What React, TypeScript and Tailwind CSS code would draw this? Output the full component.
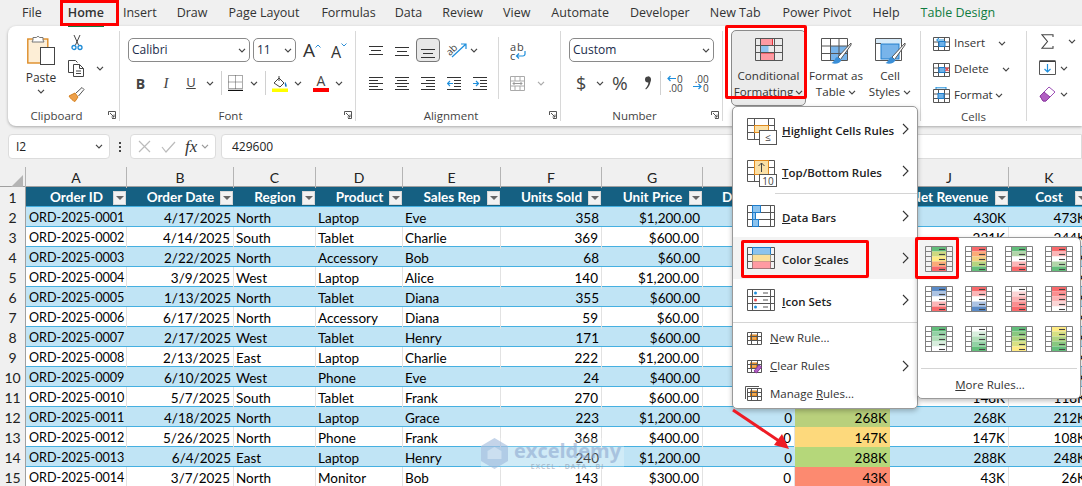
import type { ReactNode } from "react";

const sans = "font-['Open_Sans','Noto_Sans',sans-serif]";

type Row = {
  id: string;
  date: string;
  region: string;
  product: string;
  rep: string;
  units: string;
  price: string;
  gross: string;
  net: string;
  cost: string;
  fill: string;
};

const rows: Row[] = [
  { id: "0001", date: "4/17/2025", region: "North", product: "Laptop", rep: "Eve", units: "358", price: "$1,200.00", gross: "430K", net: "430K", cost: "473K", fill: "bg-[#63be7b]" },
  { id: "0002", date: "4/14/2025", region: "South", product: "Tablet", rep: "Charlie", units: "369", price: "$600.00", gross: "221K", net: "221K", cost: "244K", fill: "bg-[#c4d67c]" },
  { id: "0003", date: "2/22/2025", region: "North", product: "Accessory", rep: "Bob", units: "68", price: "$60.00", gross: "4K", net: "4K", cost: "3K", fill: "bg-[#f8696b]" },
  { id: "0004", date: "3/9/2025", region: "West", product: "Laptop", rep: "Alice", units: "140", price: "$1,200.00", gross: "168K", net: "168K", cost: "130K", fill: "bg-[#fedd80]" },
  { id: "0005", date: "1/13/2025", region: "North", product: "Tablet", rep: "Diana", units: "355", price: "$600.00", gross: "213K", net: "213K", cost: "170K", fill: "bg-[#c8d67e]" },
  { id: "0006", date: "6/17/2025", region: "North", product: "Accessory", rep: "Diana", units: "59", price: "$60.00", gross: "4K", net: "4K", cost: "3K", fill: "bg-[#f8696b]" },
  { id: "0007", date: "2/17/2025", region: "West", product: "Tablet", rep: "Henry", units: "171", price: "$600.00", gross: "103K", net: "103K", cost: "82K", fill: "bg-[#fdb47a]" },
  { id: "0008", date: "2/13/2025", region: "East", product: "Laptop", rep: "Charlie", units: "222", price: "$1,200.00", gross: "266K", net: "266K", cost: "210K", fill: "bg-[#b9d07c]" },
  { id: "0009", date: "6/10/2025", region: "West", product: "Phone", rep: "Eve", units: "24", price: "$400.00", gross: "10K", net: "10K", cost: "8K", fill: "bg-[#f8696b]" },
  { id: "0010", date: "5/7/2025", region: "South", product: "Tablet", rep: "Frank", units: "270", price: "$600.00", gross: "148K", net: "148K", cost: "118K", fill: "bg-[#fed67c]" },
  { id: "0011", date: "4/18/2025", region: "North", product: "Laptop", rep: "Grace", units: "223", price: "$1,200.00", gross: "268K", net: "268K", cost: "212K", fill: "bg-[#b9d07c]" },
  { id: "0012", date: "5/26/2025", region: "North", product: "Phone", rep: "Frank", units: "368", price: "$400.00", gross: "147K", net: "147K", cost: "108K", fill: "bg-[#fdd97c]" },
  { id: "0013", date: "6/4/2025", region: "East", product: "Laptop", rep: "Henry", units: "240", price: "$1,200.00", gross: "288K", net: "288K", cost: "248K", fill: "bg-[#b5d77a]" },
  { id: "0014", date: "3/7/2025", region: "North", product: "Monitor", rep: "Bob", units: "143", price: "$300.00", gross: "43K", net: "43K", cost: "26K", fill: "bg-[#fc8a70]" },
];

const gridCols =
  "grid grid-cols-[26px_101px_107px_82px_87px_98px_101px_101px_92px_95px_119px_80px]";

const swatches = [
  ["#63be7b", "#cdd97f", "#ffeb84", "#fbaa77", "#f8696b"],
  ["#f8696b", "#fbaa77", "#f3cf7f", "#b5d47f", "#63be7b"],
  ["#63be7b", "#b1d5a8", "#ffffff", "#fcb6b7", "#f8696b"],
  ["#f8696b", "#fcb6b7", "#ffffff", "#b1d5a8", "#63be7b"],
  ["#5a8ac6", "#acc3e3", "#ffffff", "#fcb6b7", "#f8696b"],
  ["#f8696b", "#fcb6b7", "#ffffff", "#acc3e3", "#5a8ac6"],
  ["#ffffff", "#fcd5d5", "#fcb3b4", "#fa8e8f", "#f8696b"],
  ["#f8696b", "#fa8e8f", "#fcb3b4", "#fcd5d5", "#ffffff"],
  ["#63be7b", "#92d1a4", "#b1deb9", "#d8eedd", "#ffffff"],
  ["#ffffff", "#d8eedd", "#b1deb9", "#92d1a4", "#63be7b"],
  ["#63be7b", "#88c77f", "#afd480", "#d7e082", "#ffeb84"],
  ["#ffeb84", "#d7e082", "#afd480", "#88c77f", "#63be7b"],
];

function Chev({ color = "#444" }: { color?: string }) {
  return (
    <svg width="8" height="5" viewBox="0 0 8 5" fill="none" stroke={color} strokeWidth="1.2">
      <path d="M1 .8l3 3 3-3" />
    </svg>
  );
}

function ChevSlot({ className }: { className: string }) {
  return (
    <div className={`flex justify-center ${className}`}>
      <Chev />
    </div>
  );
}

function Arrow() {
  return (
    <svg width="7" height="12" viewBox="0 0 7 12" fill="none" stroke="#333" strokeWidth="1.1">
      <path d="M1 1l5 5-5 5" />
    </svg>
  );
}

function Launcher() {
  return (
    <svg className="absolute right-[3px] bottom-[7px]" width="8" height="8" viewBox="0 0 8 8" fill="none" stroke="#555">
      <path d="M.5 4V.5H7.5V7.5H4M2 2l4 4M6 3.500V6H3.500" />
    </svg>
  );
}

function Lines({ lines, blue }: { lines: number[][]; blue?: ReactNode }) {
  return (
    <svg width="15" height="15" viewBox="0 0 15 15" stroke="#333" strokeWidth="1" fill="none">
      {lines.map(([a, b, y]) => (
        <path key={`${a}${y}`} d={`M${a} ${y + 0.5}H${b}`} />
      ))}
      {blue}
    </svg>
  );
}

function Group({ width, label, launcher, children }: { width: string; label: string; launcher?: boolean; children: ReactNode }) {
  return (
    <div className={`relative flex h-full shrink-0 flex-col ${width}`}>
      <div className="flex-1">{children}</div>
      <div className={`flex h-[20px] items-center justify-center text-[11.5px] text-[#444] ${launcher ? "pr-[14px]" : ""}`}>{label}</div>
      {launcher && <Launcher />}
    </div>
  );
}

function Divider() {
  return <div className="my-[5px] w-px shrink-0 bg-[#d8d8d8]" />;
}

function PasteIcon() {
  return (
    <svg width="28" height="33" viewBox="0 0 28 33" fill="none">
      <rect x=".8" y="5" width="20" height="24" fill="#fdeed6" stroke="#dd8c26" strokeWidth="1.4" />
      <path d="M6 6V3.500h3.500a1.600 1.600 0 013 0H16V6l1 2H5z" fill="#fff" stroke="#777" />
      <rect x="13.500" y="13.500" width="14" height="17" fill="#fff" stroke="#444" />
    </svg>
  );
}

function CutIcon() {
  return (
    <svg width="12" height="17" viewBox="0 0 12 17" fill="none">
      <path d="M3 1l4.500 10M9 1L4.500 11" stroke="#444" />
      <circle cx="3" cy="13.500" r="2" stroke="#1c8ad6" strokeWidth="1.3" />
      <circle cx="9" cy="13.500" r="2" stroke="#1c8ad6" strokeWidth="1.3" />
    </svg>
  );
}

function CopyIcon() {
  return (
    <svg width="17" height="17" viewBox="0 0 17 17" fill="none" stroke="#444">
      <path d="M5.500 12.500H.5V.5h7l2 2" />
      <path d="M5.500 4.500h6l4 4v8h-10zM11.500 4.500v4h4M8 11h5M8 13.500h5" fill="#fff" />
    </svg>
  );
}

function BrushIcon() {
  return (
    <svg width="17" height="16" viewBox="0 0 17 16" fill="none">
      <path d="M1 10l6-3 3 4-3 4.500C5 15 2.500 12.500 1 10z" fill="#eda04a" stroke="#d5801f" />
      <path d="M8 7l6-5.500 2 2-5.500 6.500" fill="#fff" stroke="#555" />
    </svg>
  );
}

function GrowFont({ up }: { up?: boolean }) {
  return (
    <div className="flex items-start">
      <span className={`${up ? "text-[19px]" : "text-[16px] mt-[3px]"} leading-[24px] text-[#333]`}>A</span>
      <svg className="mt-[6px]" width="6" height="4" viewBox="0 0 6 4" fill="none" stroke="#2f8fd6">
        <path d={up ? "M.5 3.500L3 1l2.500 2.500" : "M.5.5L3 3 5.500.5"} />
      </svg>
    </div>
  );
}

function BordersIcon() {
  return (
    <svg width="15" height="16" viewBox="0 0 15 16" fill="none" stroke="#555" strokeDasharray="1 1">
      <path d="M.5.500h14v13H.5zM7.500.5v13M.5 7h14" />
      <path d="M0 15.500h15" stroke="#111" strokeWidth="1.4" strokeDasharray="none" />
    </svg>
  );
}

function FillIcon() {
  return (
    <svg width="16" height="17" viewBox="0 0 16 17" fill="none">
      <path d="M2 8l5-5 5 5-4 4z" stroke="#444" fill="#fff" />
      <path d="M7 1v5" stroke="#444" />
      <path d="M13 7c2 2 2 5 1 5s-1.500-3-1-5z" fill="#1573c0" />
      <rect y="13.500" width="16" height="3.500" fill="#ffff00" />
    </svg>
  );
}

function WrapIcon() {
  return (
    <div className="relative h-[17px] w-[16px] font-['Open_Sans',sans-serif] text-[11px] leading-[9px] text-[#444]">
      <div className="tracking-[1px]">ab</div>
      <div>c</div>
      <svg className="absolute right-0 bottom-0" width="11" height="9" viewBox="0 0 11 9" fill="none" stroke="#1f8fdc" strokeWidth="1.2">
        <path d="M10 1v3a2 2 0 01-2 2H2M4 3.500L1.500 6 4 8.500" />
      </svg>
    </div>
  );
}

function MergeIcon() {
  return (
    <svg width="15" height="15" viewBox="0 0 15 15" fill="none" stroke="#aaa">
      <path d="M.5.500h14v14H.5zM.5 5h14M.5 10h14M5 .5V5M10 .5V5M5 10v4.500M10 10v4.500" />
      <path d="M3 7.500h9M4.500 6L3 7.500 4.500 9M10.500 6L12 7.500 10.500 9" stroke="#999" />
    </svg>
  );
}

function DecimalIcon({ more }: { more?: boolean }) {
  return (
    <div className="relative h-[16px] w-[16px] text-[10px] leading-[8px] text-[#444]">
      <div className="text-right">{more ? ".00" : "0"}</div>
      <div className="mt-[1px] text-right">{more ? "0" : ".00"}</div>
      <svg className={`absolute left-0 ${more ? "bottom-[1px]" : "top-[0px]"}`} width="9" height="7" viewBox="0 0 9 7" fill="none" stroke="#1f8fdc" strokeWidth="1.2">
        <path d={more ? "M0 3.500h8M5.500 1L8 3.500 5.500 6" : "M9 3.500H1M3.500 1L1 3.500 3.500 6"} />
      </svg>
    </div>
  );
}

function CondIcon() {
  return (
    <svg width="28" height="23" viewBox="0 0 28 23" fill="none">
      <rect x="5.500" y="7.500" width="8" height="7" fill="#8fc3ef" />
      <rect x="5.500" y=".5" width="12" height="7" fill="#ff9aa2" stroke="#e0343a" />
      <rect x="5.500" y="15" width="14" height="7.500" fill="#ff9aa2" stroke="#e0343a" />
      <path d="M.5.500h27v22H.5zM.5 7.500h27M.5 14.500h27M5.500.5v22M19.500.5v22" stroke="#555" />
    </svg>
  );
}

function StyleIcon({ wide }: { wide?: boolean }) {
  return (
    <svg width="31" height="30" viewBox="0 0 31 30" fill="none">
      {wide ? (
        <>
          <rect x=".5" y=".5" width="26" height="5" fill="#d6eaf9" />
          <rect x="6" y="6" width="18" height="15" fill="#78b4ea" stroke="#1f7dcb" />
        </>
      ) : (
        <rect x="10" y="8" width="16" height="15" fill="#78b4ea" />
      )}
      <path d={wide ? "M.5.500h26v22H.5zM.5 5.500h5.500" : "M.5.500h26v22H.5zM.5 8h26M.5 15.500h26M9.500.5v22M18 .5v22"} stroke="#555" />
      <path d="M30 5L17 19l2.500 2.500L30 7z" fill="#fff" stroke="#555" />
      <path d="M16.500 19c-3 .5-2 4-6 6 4 2 9 0 10-3z" fill="#3a8fd8" />
    </svg>
  );
}

function CellOpIcon({ kind }: { kind: "insert" | "delete" | "format" }) {
  return (
    <svg width="17" height="16" viewBox="0 0 17 16" fill="none">
      <path d="M.5 2.500h16v13H.5zM.5 7h16M.5 11.500h16M5.500 2.500v13M11.500 2.500v13" stroke="#555" />
      <rect x={kind === "format" ? 5 : 6} y="6.500" width="6" height="5" fill="#6fb2e8" stroke="#1f7dcb" />
      {kind === "insert" && <path d="M11 5H4M6 3L3.500 5 6 7" stroke="#1f8fdc" fill="#fff" />}
      {kind === "delete" && <path d="M12.500 6.500l3 3.500M15.500 6.500l-3 3.500" stroke="#e5484d" strokeWidth="1.2" />}
      {kind === "format" && <path d="M3 .8h10M3 0v2M13 0v2" stroke="#1f8fdc" />}
    </svg>
  );
}

function CellOp({ kind, label, chev }: { kind: "insert" | "delete" | "format"; label: string; chev: string }) {
  return (
    <div className="flex h-[26px] items-center text-[11.5px] text-[#333]">
      <CellOpIcon kind={kind} />
      <span className="ml-[4px]">{label}</span>
      <div className={chev}>
        <Chev />
      </div>
    </div>
  );
}

// narrow = outer columns are 5px wide (data bars, color scales, icon sets)
function MenuGridIcon({ children, narrow }: { children?: ReactNode; narrow?: boolean }) {
  const grid = narrow
    ? "M.5.500h27v21H.5zM.5 7.500h27M.5 14.500h27M5.500.5v21M23.500.5v21"
    : "M.5.500h27v21H.5zM.5 7.500h27M.5 14.500h27M7.500.5v21M21.500.5v21";
  return (
    <svg width="30" height="28" viewBox="0 0 30 28" fill="none" className="mt-[6px] shrink-0">
      <path d={grid} stroke="#555" />
      {children}
    </svg>
  );
}

function BigItem({ icon, label, active }: { icon: ReactNode; label: ReactNode; active?: boolean }) {
  return (
    <div className={`flex h-[42px] shrink-0 items-center pl-[14px] pr-[8px] ${active ? "bg-[#f3f3f3]" : ""}`}>
      <div className="w-[35px] shrink-0">{icon}</div>
      <div className="flex-1 pt-[4px] text-[11.5px] font-semibold text-[#222]">{label}</div>
      <Arrow />
    </div>
  );
}

function SmallIcon({ variant }: { variant: "new" | "clear" | "manage" }) {
  return (
    <svg width="17" height="16" viewBox="0 0 17 16" fill="none">
      {variant === "manage" && <path d="M.5 13V.5H14" stroke="#555" />}
      <rect x="5.500" y="5" width="6" height="5" fill="#f3a94f" stroke="#d47d17" />
      <path d="M2.500 2.500h14v12h-14zM2.500 6.500h14M2.500 10.500h14M6.500 2.500v12M12.500 2.500v12" stroke="#555" />
      {variant === "clear" && <path d="M9 13l5-6 2.500 2-5 6z" fill="#b15fc2" stroke="#8c3aa0" />}
    </svg>
  );
}

function SmallItem({ variant, label, more }: { variant: "new" | "clear" | "manage"; label: ReactNode; more?: boolean }) {
  return (
    <div className="flex h-[28px] shrink-0 items-center pl-[12px] pr-[8px] text-[11.5px] text-[#333]">
      <div className="w-[25px] shrink-0">
        <SmallIcon variant={variant} />
      </div>
      <div className="flex-1">{label}</div>
      {more && <Arrow />}
    </div>
  );
}

function Swatch({ colors }: { colors: string[] }) {
  return (
    <svg width="28" height="26" viewBox="0 0 28 26" fill="none">
      {colors.map((c, i) => (
        <g key={i}>
          <rect x="6.500" y={0.5 + i * 5} width="15" height="5" fill={c} />
          <path d={`M14 ${3.5 + i * 5}h6`} stroke="#444" strokeWidth="1.1" />
        </g>
      ))}
      <path d="M.5.500h27v25H.5zM.5 5.500h6M.5 10.500h6M.5 15.500h6M.5 20.500h6M21.500 5.500h6M21.500 10.500h6M21.500 15.500h6M21.500 20.500h6M6.500.5v25M21.500.5v25" stroke="#808080" />
    </svg>
  );
}

function ColHead({ label, right }: { label: string; right?: boolean }) {
  return (
    <div className={`flex items-center justify-center border-[#b4b4b4] text-[#222] ${right ? "" : "border-r"}`}>{label}</div>
  );
}

function HeadCell({ label }: { label: string }) {
  return (
    <div className="relative flex items-center justify-center overflow-hidden whitespace-nowrap font-bold text-white">
      {label}
      <div className="absolute top-[4px] right-[1px] flex h-[14px] w-[13px] items-center justify-center border border-[#d8d8d8] bg-[#f2f2f2]">
        <div className="h-0 w-0 border-x-[4px] border-t-[4px] border-x-transparent border-t-[#666]" />
      </div>
    </div>
  );
}

function Cell({ children, right, grid }: { children?: ReactNode; right?: boolean; grid?: boolean }) {
  return (
    <div className={`flex items-center overflow-hidden whitespace-nowrap text-black ${right ? "justify-end pr-[3px]" : "pl-[2px]"} ${grid ? "border-r border-[#e2e2e2]" : ""}`}>
      {children}
    </div>
  );
}

export default function App() {
  return (
    <div className={`relative h-[486px] w-[1082px] overflow-hidden bg-[#f0f0f0] ${sans}`}>
      {/* tabs */}
      <div className="flex h-[26px] items-center pl-[22px] text-[12.5px] text-[#333]">
        <span>File</span>
        <span className="relative ml-[26px] font-semibold">
          Home
          <span className="absolute right-0 bottom-[-5px] left-0 h-[2px] bg-[#107c41]" />
        </span>
        <span className="ml-[19px]">Insert</span>
        <span className="ml-[20px]">Draw</span>
        <span className="ml-[21px]">Page Layout</span>
        <span className="ml-[22px]">Formulas</span>
        <span className="ml-[19px]">Data</span>
        <span className="ml-[20px]">Review</span>
        <span className="ml-[20px]">View</span>
        <span className="ml-[21px]">Automate</span>
        <span className="ml-[21px]">Developer</span>
        <span className="ml-[20px]">New Tab</span>
        <span className="ml-[22px]">Power Pivot</span>
        <span className="ml-[21px]">Help</span>
        <span className="ml-[21px] text-[#107c41]">Table Design</span>
      </div>

      {/* ribbon */}
      <div className="ml-[8px] flex h-[100px] rounded-l-[8px] bg-white shadow-[0_1px_3px_rgba(0,0,0,0.3)]">
        <Group width="w-[111px]" label="Clipboard" launcher>
          <div className="flex h-full">
            <div className="ml-[13px] flex w-[40px] flex-col items-center pt-[8px]">
              <PasteIcon />
              <span className="mt-[3px] text-[12px] leading-[16px] text-[#333]">Paste</span>
              <div className="mt-[3px]">
                <Chev />
              </div>
            </div>
            <div className="ml-[7px] flex flex-col pt-[8px]">
              <div className="ml-[3px]">
                <CutIcon />
              </div>
              <div className="mt-[9px] flex items-center">
                <CopyIcon />
                <div className="ml-[11px]">
                  <Chev />
                </div>
              </div>
              <div className="mt-[9px]">
                <BrushIcon />
              </div>
            </div>
          </div>
        </Group>
        <Divider />
        <Group width="w-[235px]" label="Font" launcher>
          <div className="pt-[12px] pl-[8px]">
            <div className="flex h-[24px] items-center">
              <div className="flex h-[24px] w-[122px] items-center justify-between rounded-[5px] border border-[#8a8a8a] px-[3px] text-[12px] text-[#1a2b4a]">
                Calibri
                <Chev />
              </div>
              <div className="ml-[3px] flex h-[24px] w-[43px] items-center justify-between rounded-[5px] border border-[#8a8a8a] pr-[3px] pl-[3px] text-[12px] text-[#1a2b4a]">
                11
                <Chev />
              </div>
              <div className="ml-[7px] w-[28px]">
                <GrowFont up />
              </div>
              <GrowFont />
            </div>
            <div className="mt-[9px] flex h-[24px] items-center">
              <div className="flex w-[25px] justify-center text-[14px] font-bold text-[#444]">B</div>
              <div className="flex w-[26px] justify-center font-['Liberation_Serif',serif] text-[15px] italic text-[#444]">I</div>
              <div className="flex w-[24px] justify-center text-[13px] text-[#444] underline">U</div>
              <ChevSlot className="w-[14px]" />
              <div className="ml-[4px] h-[24px] w-px bg-[#d0d0d0]" />
              <div className="ml-[6px] w-[15px]">
                <BordersIcon />
              </div>
              <ChevSlot className="w-[22px]" />
              <div className="h-[24px] w-px bg-[#d0d0d0]" />
              <div className="ml-[6px] w-[16px]">
                <FillIcon />
              </div>
              <ChevSlot className="w-[20px]" />
              <div className="ml-[5px] flex w-[16px] flex-col items-center">
                <span className="text-[14px] leading-[13px] text-[#444]">A</span>
                <div className="mt-[1px] h-[4px] w-[16px] bg-[#ff0000]" />
              </div>
              <ChevSlot className="w-[20px]" />
            </div>
          </div>
        </Group>
        <Divider />
        <Group width="w-[204px]" label="Alignment" launcher>
          <div className="flex h-full">
            <div className="ml-[13px] w-[129px] pt-[12px]">
              <div className="flex h-[24px] items-center">
                <Lines lines={[[0, 14, 3], [2, 12, 7], [0, 14, 11]]} />
                <div className="ml-[11px]">
                  <Lines lines={[[0, 14, 4], [2, 12, 8], [0, 14, 12]]} />
                </div>
                <div className="ml-[6px] flex h-[24px] w-[24px] items-center justify-center rounded-[4px] border border-[#777] bg-[#e8e8e8]">
                  <Lines lines={[[0, 14, 6], [2, 12, 10], [0, 14, 14]]} />
                </div>
                <svg className="ml-[6px]" width="22" height="18" viewBox="0 0 22 18" fill="none" stroke="#1f8fdc" strokeWidth="1.2">
                  <path d="M6 16L20 3M15 3h5v5" />
                  <text x="0" y="12" fontSize="10" fill="#444" stroke="none" transform="rotate(-45 6 9)">ab</text>
                </svg>
                <div className="ml-[2px]">
                  <Chev />
                </div>
              </div>
              <div className="mt-[9px] flex h-[24px] items-center gap-[11px]">
                <Lines lines={[[0, 14, 1], [0, 9, 4], [0, 14, 7], [0, 9, 10], [0, 14, 13]]} />
                <Lines lines={[[0, 14, 1], [2, 12, 4], [0, 14, 7], [2, 12, 10], [0, 14, 13]]} />
                <Lines lines={[[0, 14, 1], [5, 14, 4], [0, 14, 7], [5, 14, 10], [0, 14, 13]]} />
                <Lines lines={[[0, 14, 1], [7, 14, 4], [7, 14, 7], [7, 14, 10], [0, 14, 13]]} blue={<path d="M6 7.500H1M3 5L.5 7.500 3 10" stroke="#1f8fdc" strokeWidth="1.2" />} />
                <Lines lines={[[0, 14, 1], [7, 14, 4], [7, 14, 7], [7, 14, 10], [0, 14, 13]]} blue={<path d="M0 7.500h5M3 5l2.500 2.500L3 10" stroke="#1f8fdc" strokeWidth="1.2" />} />
              </div>
            </div>
            <div className="mt-[11px] h-[62px] w-px bg-[#d8d8d8]" />
            <div className="ml-[11px] flex flex-col pt-[16px]">
              <WrapIcon />
              <div className="mt-[17px] flex items-center">
                <MergeIcon />
                <div className="ml-[12px]">
                  <Chev color="#aaa" />
                </div>
              </div>
            </div>
          </div>
        </Group>
        <Divider />
        <Group width="w-[161px]" label="Number" launcher>
          <div className="pt-[12px] pl-[8px]">
            <div className="flex h-[24px] w-[145px] items-center justify-between rounded-[5px] border border-[#8a8a8a] px-[3px] text-[12px] text-[#1a2b4a]">
              Custom
              <Chev />
            </div>
            <div className="mt-[9px] flex h-[24px] items-center text-[#444]">
              <div className="ml-[7px] w-[10px] text-[18px] leading-[24px]">$</div>
              <div className="ml-[10px]">
                <Chev />
              </div>
              <div className="ml-[8px] text-[19px] leading-[24px]">%</div>
              <svg className="ml-[17px] mr-[9px]" width="6" height="14" viewBox="0 0 6 14" fill="#444">
                <circle cx="3" cy="3.500" r="3" />
                <path d="M3.500 0C6.500 2 6.500 9 1 13.500L.3 12.800C3.500 9.500 3.800 6 3 6z" />
              </svg>
              <div className="h-[24px] w-px bg-[#d0d0d0]" />
              <div className="ml-[6px]">
                <DecimalIcon />
              </div>
              <div className="ml-[10px]">
                <DecimalIcon more />
              </div>
            </div>
          </div>
        </Group>
        <Divider />
        <Group width="w-[197px]" label="">
          <div className="flex pt-[4px] text-[11.6px] leading-[16px] text-[#333]">
            <div className="ml-[8px] flex h-[76px] w-[75px] flex-col items-center rounded-[5px] border border-[#8a8a8a] bg-[#ebebeb] pt-[7px]">
              <CondIcon />
              <span className="mt-[7px]">Conditional</span>
              <span className="flex items-center gap-[2px]">
                Formatting <Chev />
              </span>
            </div>
            <div className="flex w-[60px] flex-col items-center pt-[8px]">
              <StyleIcon />
              <span className="whitespace-nowrap">Format as</span>
              <span className="flex items-center gap-[3px]">
                Table <Chev />
              </span>
            </div>
            <div className="flex w-[48px] flex-col items-center pt-[8px]">
              <StyleIcon wide />
              <span>Cell</span>
              <span className="flex items-center gap-[3px]">
                Styles <Chev />
              </span>
            </div>
          </div>
        </Group>
        <Divider />
        <Group width="w-[105px]" label="Cells">
          <div className="pt-[4px] pl-[12px]">
            <CellOp kind="insert" label="Insert" chev="ml-[13px]" />
            <CellOp kind="delete" label="Delete" chev="ml-[13px]" />
            <CellOp kind="format" label="Format" chev="ml-[2px]" />
          </div>
        </Group>
        <Divider />
        <div className="flex flex-1 flex-col pt-[8px] pl-[12px]">
          <div className="flex h-[26px] items-start">
            <svg className="ml-[2px]" width="13" height="15" viewBox="0 0 13 15" fill="none" stroke="#444" strokeWidth="1.1">
              <path d="M12 3V.8H1l5.500 6.700L1 14.200h11V12" />
            </svg>
            <div className="ml-[14px] mt-[5px]">
              <Chev />
            </div>
          </div>
          <div className="flex h-[26px] items-start">
            <svg width="17" height="16" viewBox="0 0 17 16" fill="none">
              <path d="M.5 1.500h16v13H.5z" stroke="#555" />
              <path d="M.5 1h16" stroke="#333" strokeWidth="1.500" />
              <path d="M8.500 4v8M5.500 9l3 3 3-3" stroke="#1f8fdc" strokeWidth="1.200" />
            </svg>
            <div className="ml-[4px] mt-[6px]">
              <Chev />
            </div>
          </div>
          <div className="flex h-[26px] items-start">
            <svg width="17" height="16" viewBox="0 0 17 16" fill="none">
              <path d="M1 10l9-9 6 5-9 9H4z" fill="#fff" stroke="#9c4fb5" />
              <path d="M1 10l4-4 6 5-4 4H4z" fill="#b15fc2" stroke="#8c3aa0" />
            </svg>
            <div className="ml-[4px] mt-[6px]">
              <Chev />
            </div>
          </div>
        </div>
      </div>

      {/* formula bar */}
      <div className="mt-[8px] flex h-[25px] items-stretch text-[12px] text-[#222]">
        <div className="ml-[8px] flex w-[102px] items-center justify-between rounded-[4px] border border-[#dcdcdc] bg-white pr-[6px] pl-[7px]">
          I2
          <Chev />
        </div>
        <div className="flex w-[20px] flex-col items-center justify-center gap-[2px]">
          <div className="h-[2px] w-[2px] bg-[#444]" />
          <div className="h-[2px] w-[2px] bg-[#444]" />
          <div className="h-[2px] w-[2px] bg-[#444]" />
        </div>
        <div className="flex w-[86px] items-center rounded-[4px] border border-[#dcdcdc] bg-white pl-[7px]">
          <svg width="13" height="13" viewBox="0 0 13 13" fill="none" stroke="#bbb" strokeWidth="1.2">
            <path d="M1 1l11 11M12 1L1 12" />
          </svg>
          <svg className="ml-[10px]" width="15" height="12" viewBox="0 0 15 12" fill="none" stroke="#bbb" strokeWidth="1.2">
            <path d="M1 6l4 5 9-10" />
          </svg>
          <span className="ml-[9px] font-['Liberation_Serif',serif] text-[17px] italic text-[#333]">fx</span>
          <div className="ml-[4px]">
            <Chev color="#999" />
          </div>
        </div>
        <div className="ml-[5px] flex flex-1 items-center rounded-l-[4px] border border-[#dcdcdc] bg-white pl-[10px]">429600</div>
      </div>

      {/* sheet */}
      <div className="mt-[8px] text-[13.5px] font-['Lato',sans-serif]">
        <div className={`${gridCols} h-[20px] border-b border-[#a0a0a0] text-[14px]`}>
          <div className="flex items-end justify-end border-r border-[#b4b4b4] pr-[2px] pb-[1px]">
            <div className="h-0 w-0 border-b-[12px] border-l-[12px] border-b-[#b4b4b4] border-l-transparent" />
          </div>
          {["A", "B", "C", "D", "E", "F", "G", "H", "I", "J"].map((c) => (
            <ColHead key={c} label={c} />
          ))}
          <ColHead label="K" right />
        </div>
        <div className={`${gridCols} h-[20px] border-b border-[#45b0e1] bg-[#156082]`}>
          <div className="flex items-center justify-center border-r border-[#a0a0a0] bg-[#f0f0f0] text-[14px] text-[#222]">1</div>
          <HeadCell label="Order ID" />
          <HeadCell label="Order Date" />
          <HeadCell label="Region" />
          <HeadCell label="Product" />
          <HeadCell label="Sales Rep" />
          <HeadCell label="Units Sold" />
          <HeadCell label="Unit Price" />
          <HeadCell label="Discount" />
          <HeadCell label="Gross Revenue" />
          <HeadCell label="Net Revenue" />
          <HeadCell label="Cost" />
        </div>
        {rows.map((r, i) => {
          const plain = i % 2 === 1;
          return (
            <div key={r.id} className={`${gridCols} h-[20px] border-b border-[#45b0e1] ${plain ? "bg-white" : "bg-[#c0e4f5]"}`}>
              <div className="flex items-center justify-center border-r border-b border-r-[#a0a0a0] border-b-[#d4d4d4] bg-[#f0f0f0] text-[14px] text-[#222]">{i + 2}</div>
              <div className={`flex items-center whitespace-nowrap pl-[3px] text-[12.6px] text-black ${plain ? "border-r border-[#e2e2e2]" : ""}`}>ORD-2025-{r.id}</div>
              <Cell right grid={plain}>{r.date}</Cell>
              <Cell grid={plain}>{r.region}</Cell>
              <Cell grid={plain}>{r.product}</Cell>
              <Cell grid={plain}>{r.rep}</Cell>
              <Cell right grid={plain}>{r.units}</Cell>
              <Cell right grid={plain}>{r.price}</Cell>
              <Cell right grid={plain}>0</Cell>
              <div className={`flex items-center justify-end px-[3px] text-black ${r.fill}`}>{r.gross}</div>
              <Cell right grid={plain}>{r.net}</Cell>
              <Cell right>{r.cost}</Cell>
            </div>
          );
        })}
      </div>

      {/* watermark */}
      <div className="absolute top-[438px] left-[481px] flex h-[32px] w-[143px] items-start bg-white/25">
        <svg width="27" height="31" viewBox="0 0 27 31" className="shrink-0 opacity-60">
          <path d="M13.500 0L27 8v15l-13.500 8L0 23V8z" fill="#9db8dc" />
          <path d="M13.500 9l7 4v8h-14v-8z" fill="#c8d8ec" />
        </svg>
        <div className="ml-[6px] flex flex-col items-center font-['Open_Sans',sans-serif] opacity-60">
          <span className="text-[20px] font-bold leading-[25px] text-[#8fa9d0]">exceldemy</span>
          <span className="text-[7px] font-semibold leading-[8px] tracking-[1px] text-[#8a9ab0]">EXCEL · DATA · BI</span>
        </div>
      </div>

      {/* conditional formatting menu */}
      <div className="absolute top-[106px] left-[732px] z-20 flex h-[303px] w-[186px] flex-col rounded-[5px] border border-[#9a9a9a] bg-white pt-[1px] shadow-[0_2px_5px_rgba(0,0,0,0.25)]">
        <BigItem
          label={<><u>H</u>ighlight Cells Rules</>}
          icon={
            <MenuGridIcon>
              <rect x="7.500" y="7.500" width="14" height="7" fill="#fbe0a6" stroke="#e08a1e" />
              <rect x="12.500" y="12.500" width="17" height="14" fill="#fff" stroke="#555" />
              <text x="21" y="23" fontSize="10" fill="#444" textAnchor="middle">≤</text>
            </MenuGridIcon>
          }
        />
        <BigItem
          label={<><u>T</u>op/Bottom Rules</>}
          icon={
            <MenuGridIcon>
              <rect x="7.500" y=".5" width="14" height="14" fill="#fbe0a6" stroke="#e08a1e" />
              <path d="M14.500 12V3M11.500 6l3-3 3 3" stroke="#444" />
              <rect x="12.500" y="14.500" width="17" height="12" fill="#fff" stroke="#555" />
              <text x="21" y="24.500" fontSize="10" fill="#444" textAnchor="middle">10</text>
            </MenuGridIcon>
          }
        />
        <div className="mt-[1px] mb-[1px] ml-[42px] h-px shrink-0 bg-[#d4d4d4]" />
        <BigItem
          label={<><u>D</u>ata Bars</>}
          icon={
            <MenuGridIcon narrow>
              <rect x="5.500" y=".5" width="8" height="7" fill="#8cc3ee" stroke="#1f7dcb" />
              <rect x="5.500" y="7.500" width="3" height="7" fill="#8cc3ee" stroke="#1f7dcb" />
              <rect x="5.500" y="14.500" width="6" height="7" fill="#8cc3ee" stroke="#1f7dcb" />
            </MenuGridIcon>
          }
        />
        <BigItem
          active
          label={<>Color <u>S</u>cales</>}
          icon={
            <MenuGridIcon narrow>
              <rect x="5.500" y=".5" width="18" height="7" fill="#8cc3ee" stroke="#1f7dcb" />
              <rect x="5.500" y="7.500" width="18" height="7" fill="#fbdf9b" />
              <rect x="5.500" y="14.500" width="18" height="7" fill="#ff9aa2" />
            </MenuGridIcon>
          }
        />
        <BigItem
          label={<><u>I</u>con Sets</>}
          icon={
            <MenuGridIcon narrow>
              <circle cx="8.500" cy="4" r="1.500" fill="#1f8fdc" />
              <circle cx="8.500" cy="11" r="1.500" fill="#e5484d" />
              <circle cx="8.500" cy="18" r="1.500" fill="#1f8fdc" />
              <path d="M16 4h5M16 11h5M16 18h5" stroke="#555" />
            </MenuGridIcon>
          }
        />
        <div className="mt-[1px] mb-[1px] h-px shrink-0 bg-[#d4d4d4]" />
        <SmallItem variant="new" label={<><u>N</u>ew Rule...</>} />
        <SmallItem variant="clear" label={<><u>C</u>lear Rules</>} more />
        <SmallItem variant="manage" label={<>Manage <u>R</u>ules...</>} />
      </div>

      {/* color scales submenu */}
      <div className="absolute top-[237px] left-[917px] z-20 h-[162px] w-[164px] rounded-[5px] border border-[#9a9a9a] bg-white shadow-[0_2px_5px_rgba(0,0,0,0.25)]">
        <div className="absolute top-[1px] left-[1px] h-[41px] w-[40px] bg-[#f3f3f3]" />
        <div className="relative grid grid-cols-[repeat(4,28px)] gap-x-[12px] gap-y-[14px] pt-[8px] pl-[7px]">
          {swatches.map((colors, i) => (
            <Swatch key={i} colors={colors} />
          ))}
        </div>
        <div className="relative mx-[3px] mt-[16px] h-px bg-[#d4d4d4]" />
        <div className="mt-[7px] pr-[18px] text-center text-[11.5px] text-[#333]">
          <u>M</u>ore Rules...
        </div>
      </div>

      {/* red callouts */}
      <div className="absolute top-[0px] left-[60px] z-30 h-[26px] w-[59px] border-[3px] border-[#ff0000]" />
      <div className="absolute top-[25px] left-[725px] z-30 h-[74px] w-[82px] rounded-[2px] border-[3px] border-[#ff0000]" />
      <div className="absolute top-[240px] left-[741px] z-30 h-[38px] w-[128px] rounded-[2px] border-[3px] border-[#ff0000]" />
      <div className="absolute top-[237px] left-[915px] z-30 h-[42px] w-[44px] rounded-[2px] border-[3px] border-[#ff0000]" />
      <svg className="absolute top-[405px] left-[728px] z-30" width="70" height="50" viewBox="0 0 70 50" fill="none">
        <path d="M5 5L54 38" stroke="#ee1c25" strokeWidth="3" />
        <path d="M61 44L46 40L54 29z" fill="#ee1c25" />
      </svg>
    </div>
  );
}
